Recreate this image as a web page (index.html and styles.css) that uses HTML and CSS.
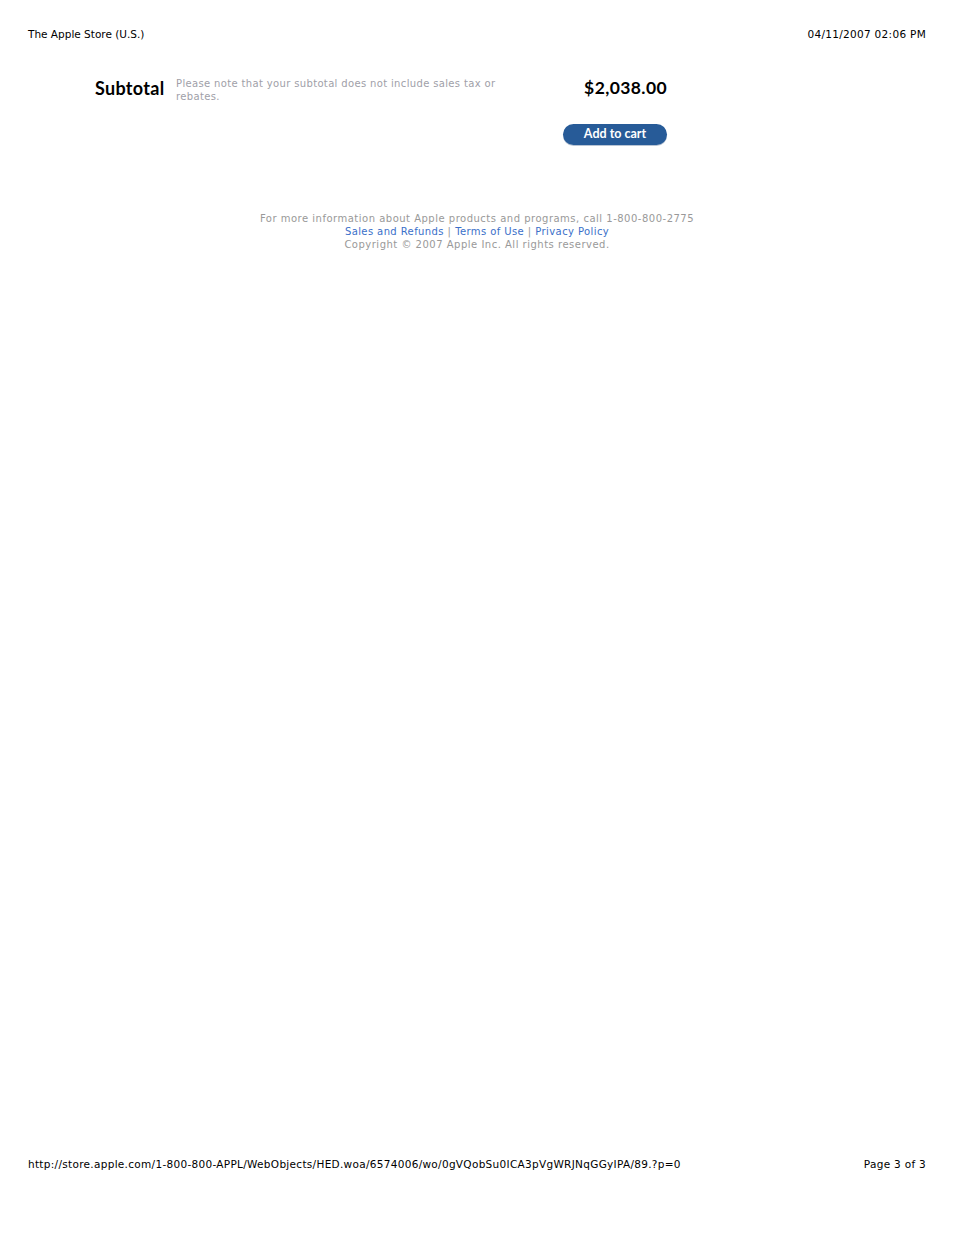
FILE: index.html
```html
<!DOCTYPE html>
<html>
<head>
<meta charset="utf-8">
<title>The Apple Store (U.S.)</title>
<link rel="stylesheet" href="styles.css">
</head>
<body>
<div class="page">
  <div class="print-bar top">
    <span class="title">The Apple Store (U.S.)</span>
    <span>04/11/2007 02:06 PM</span>
  </div>

  <div class="summary">
    <div class="subtotal-row">
      <div class="label">Subtotal</div>
      <div class="note">Please note that your subtotal does not include sales tax or rebates.</div>
      <div class="price">$2,038.00</div>
    </div>
    <div class="cart-row">
      <span class="cart-btn">Add to cart</span>
    </div>
  </div>

  <div class="site-footer">
    <div>For more information about Apple products and programs, call 1-800-800-2775</div>
    <div><a href="#">Sales and Refunds</a> <span class="sep">|</span> <a href="#">Terms of Use</a> <span class="sep">|</span> <a href="#">Privacy Policy</a></div>
    <div>Copyright © 2007 Apple Inc. All rights reserved.</div>
  </div>

  <div class="print-bar bottom">
    <span>http://store.apple.com/1-800-800-APPL/WebObjects/HED.woa/6574006/wo/0gVQobSu0ICA3pVgWRJNqGGyIPA/89.?p=0</span>
    <span>Page 3 of 3</span>
  </div>
</div>
</body>
</html>
```

FILE: styles.css
```css
html, body {
  margin: 0;
  padding: 0;
  background: #fff;
}
.page {
  height: 1235px;
  display: flex;
  flex-direction: column;
  font-family: "DejaVu Sans", "Liberation Sans", sans-serif;
  color: #000;
}
.print-bar {
  display: flex;
  justify-content: space-between;
  padding: 0 28px;
  font-size: 10.5px;
  line-height: 14px;
  letter-spacing: 0.3px;
}
.print-bar .title {
  letter-spacing: 0;
}
.print-bar.top {
  padding-top: 27px;
}
.print-bar.bottom {
  margin-top: auto;
  padding-bottom: 64px;
}
.summary {
  width: 572px;
  margin: 36px 0 0 95px;
}
.subtotal-row {
  display: flex;
  align-items: flex-start;
}
.label {
  font-family: Lato, "Open Sans", sans-serif;
  font-weight: bold;
  font-size: 18px;
  line-height: 22px;
  letter-spacing: 0.3px;
  width: 81px;
  flex: none;
}
.note {
  color: #a0a0a8;
  font-size: 10px;
  line-height: 13px;
  letter-spacing: 0.35px;
  width: 330px;
  flex: none;
}
.price {
  margin-left: auto;
  font-family: Lato, "Open Sans", sans-serif;
  font-weight: bold;
  font-size: 17.5px;
  line-height: 22px;
  letter-spacing: 0.4px;
}
.cart-row {
  display: flex;
  justify-content: flex-end;
  margin-top: 21px;
}
.cart-btn {
  display: inline-block;
  width: 104px;
  height: 21px;
  line-height: 20px;
  border-radius: 11px;
  background: #275b98;
  color: #fff;
  text-align: center;
  font-family: Lato, "Open Sans", sans-serif;
  font-weight: bold;
  font-size: 12.5px;
  box-shadow: 0 1px 0 #b8c4d4;
}
.site-footer {
  margin-top: 67px;
  text-align: center;
  font-size: 10px;
  line-height: 13px;
  letter-spacing: 0.5px;
  color: #999;
}
.site-footer a {
  color: #3a6fc9;
  text-decoration: none;
  letter-spacing: 0.4px;
}
.site-footer .sep {
  color: #999;
}
```
